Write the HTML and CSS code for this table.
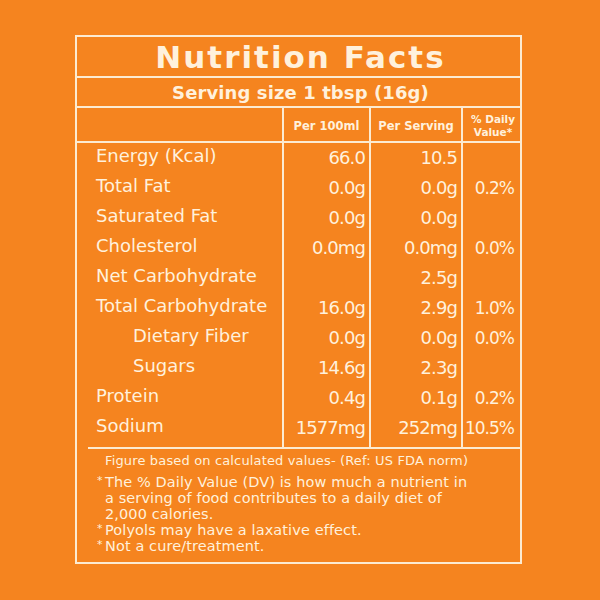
FILE: index.html
```html
<!DOCTYPE html>
<html>
<head>
<meta charset="utf-8">
<link rel="stylesheet" href="styles.css">
</head>
<body>
<div class="panel">
  <div class="title">Nutrition Facts</div>
  <div class="serving">Serving size 1 tbsp (16g)</div>
  <div class="grid">
    <div class="hcell"></div>
    <div class="hcell col">Per 100ml</div>
    <div class="hcell col">Per Serving</div>
    <div class="hcell col dv">% Daily<br>Value*</div>

    <div class="label">Energy (Kcal)</div><div class="val">66.0</div><div class="val">10.5</div><div class="val pct"></div>
    <div class="label">Total Fat</div><div class="val">0.0g</div><div class="val">0.0g</div><div class="val pct">0.2%</div>
    <div class="label">Saturated Fat</div><div class="val">0.0g</div><div class="val">0.0g</div><div class="val pct"></div>
    <div class="label">Cholesterol</div><div class="val">0.0mg</div><div class="val">0.0mg</div><div class="val pct">0.0%</div>
    <div class="label">Net Carbohydrate</div><div class="val"></div><div class="val">2.5g</div><div class="val pct"></div>
    <div class="label">Total Carbohydrate</div><div class="val">16.0g</div><div class="val">2.9g</div><div class="val pct">1.0%</div>
    <div class="label sub">Dietary Fiber</div><div class="val">0.0g</div><div class="val">0.0g</div><div class="val pct">0.0%</div>
    <div class="label sub">Sugars</div><div class="val">14.6g</div><div class="val">2.3g</div><div class="val pct"></div>
    <div class="label">Protein</div><div class="val">0.4g</div><div class="val">0.1g</div><div class="val pct">0.2%</div>
    <div class="label last">Sodium</div><div class="val last">1577mg</div><div class="val last">252mg</div><div class="val pct last">10.5%</div>
  </div>
  <div class="rule"></div>
  <div class="notes">
    <p class="figure">Figure based on calculated values- (Ref: US FDA norm)</p>
    <p class="note"><span class="star">*</span><span>The % Daily Value (DV) is how much a nutrient in<br>a serving of food contributes to a daily diet of<br>2,000 calories.</span></p>
    <p class="note"><span class="star">*</span><span>Polyols may have a laxative effect.</span></p>
    <p class="note"><span class="star">*</span><span>Not a cure/treatment.</span></p>
  </div>
</div>
</body>
</html>
```

FILE: styles.css
```css
html, body {
  margin: 0;
  padding: 0;
  background: #f5841f;
}
body {
  width: 600px;
  height: 600px;
  overflow: hidden;
  font-family: "DejaVu Sans", sans-serif;
  color: #fff1dc;
}
.panel {
  margin: 35px 0 0 75px;
  width: 447px;
  height: 529px;
  box-sizing: border-box;
  border: 2px solid #fcebd2;
  display: flex;
  flex-direction: column;
}
.title {
  height: 39px;
  border-bottom: 2px solid #fcebd2;
  display: flex;
  align-items: center;
  justify-content: center;
  font-size: 31px;
  font-weight: bold;
  letter-spacing: 2px;
  padding-left: 4px;
}
.serving {
  height: 28px;
  border-bottom: 2px solid #fcebd2;
  display: flex;
  align-items: center;
  justify-content: center;
  font-size: 18px;
  font-weight: bold;
  letter-spacing: 0.1px;
  padding-left: 4px;
}
.grid {
  display: grid;
  grid-template-columns: 205px 87px 92px 59px;
}
.hcell {
  border-bottom: 2px solid #fcebd2;
  display: flex;
  align-items: center;
  justify-content: center;
  text-align: center;
  font-size: 11.5px;
  font-weight: bold;
  padding-top: 2px;
  height: 31px;
}
.col {
  border-left: 2px solid #fcebd2;
}
.dv {
  font-size: 10.5px;
  line-height: 12.5px;
  padding-left: 3px;
}
.label {
  height: 30px;
  line-height: 26px;
  padding-left: 19px;
  font-size: 18px;
  white-space: nowrap;
}
.label.sub {
  padding-left: 56px;
}
.val {
  height: 30px;
  line-height: 30px;
  border-left: 2px solid #fcebd2;
  text-align: right;
  padding-right: 4px;
  font-size: 18px;
  letter-spacing: -0.9px;
  white-space: nowrap;
}
.val.pct {
  padding-right: 6px;
  font-size: 17px;
  letter-spacing: -1px;
}
.last {
  height: 34px;
}
.rule {
  margin-left: 11px;
  height: 2px;
  background: #fcebd2;
}
.notes {
  padding: 4px 0 0 20px;
}
.notes p {
  margin: 0;
}
.figure {
  padding-left: 8px;
  font-size: 13px;
  letter-spacing: 0.15px;
  line-height: 16px;
  margin-bottom: 5px !important;
}
.note {
  display: flex;
  font-size: 14.5px;
  letter-spacing: 0.1px;
  line-height: 16px;
  white-space: nowrap;
}
.star {
  flex: 0 0 8px;
  font-size: 11px;
  line-height: 13px;
}
```
